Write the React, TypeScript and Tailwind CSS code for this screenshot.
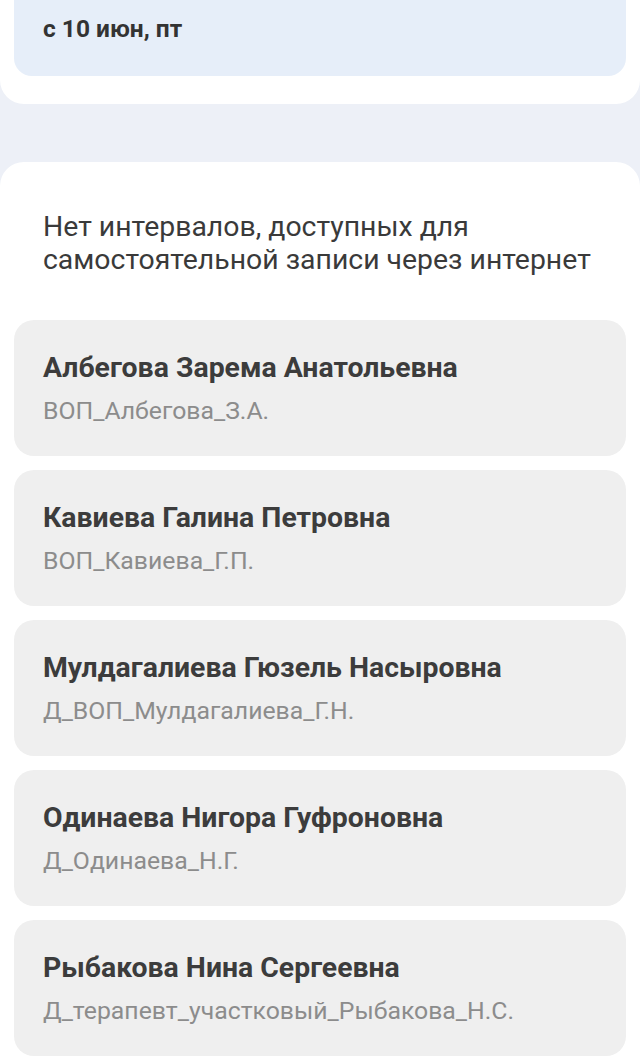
import React from "react";

const doctors = [
  { name: "Албегова Зарема Анатольевна", sub: "ВОП_Албегова_З.А." },
  { name: "Кавиева Галина Петровна", sub: "ВОП_Кавиева_Г.П." },
  { name: "Мулдагалиева Гюзель Насыровна", sub: "Д_ВОП_Мулдагалиева_Г.Н." },
  { name: "Одинаева Нигора Гуфроновна", sub: "Д_Одинаева_Н.Г." },
  { name: "Рыбакова Нина Сергеевна", sub: "Д_терапевт_участковый_Рыбакова_Н.С." },
];

export default function App() {
  return (
    <div
      className="min-h-screen bg-[#edf0f7] overflow-hidden"
      style={{ fontFamily: "Roboto, 'Noto Sans', sans-serif" }}
    >
      <div className="bg-white rounded-b-[24px] px-[14px] pb-[28px]">
        <div className="bg-[#e6eef9] rounded-b-[18px] h-[76px] px-[29px] pt-[13px]">
          <div className="text-[24.5px] leading-[32px] font-bold text-[#333333]">с 10 июн, пт</div>
        </div>
      </div>
      <div className="mt-[58px] bg-white rounded-t-[24px] px-[14px] pt-[48px] pb-[24px]">
        <p className="px-[29px] text-[28.4px] leading-[33px] text-[#3a3a3a]">
          Нет интервалов, доступных для
          <br />
          самостоятельной записи через интернет
        </p>
        <div className="mt-[44px] flex flex-col gap-[14px]">
          {doctors.map((d) => (
            <div key={d.name} className="bg-[#efefef] rounded-[20px] h-[136px] px-[29px] pt-[32px]">
              <div className="text-[28.4px] leading-[32px] font-bold text-[#3c3c3c]">{d.name}</div>
              <div className="mt-[13px] text-[24.8px] leading-[28px] text-[#8c8c8c]">{d.sub}</div>
            </div>
          ))}
        </div>
      </div>
    </div>
  );
}
